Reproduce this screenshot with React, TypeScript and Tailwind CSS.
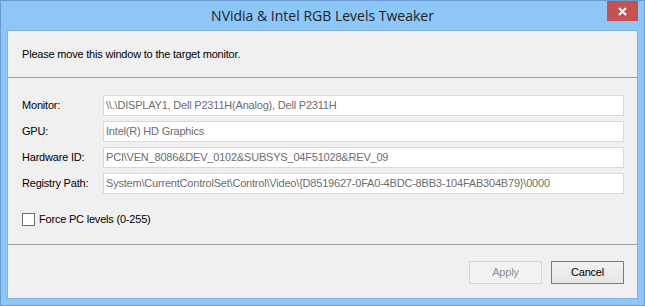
import React from "react";

const rows = [
  { label: "Monitor:", value: "\\\\.\\DISPLAY1, Dell P2311H(Analog), Dell P2311H" },
  { label: "GPU:", value: "Intel(R) HD Graphics" },
  { label: "Hardware ID:", value: "PCI\\VEN_8086&DEV_0102&SUBSYS_04F51028&REV_09" },
  {
    label: "Registry Path:",
    value: "System\\CurrentControlSet\\Control\\Video\\{D8519627-0FA0-4BDC-8BB3-104FAB304B79}\\0000",
  },
];

export default function App() {
  return (
    <div className="w-[645px] h-[306px] bg-[#8cc7f8] border border-[#6b9bd3] flex flex-col font-['Liberation_Sans',Arial,sans-serif] text-[11px] tracking-[-0.2px] text-black">
      {/* Title bar */}
      <div className="relative h-[29px] flex items-center justify-center shrink-0">
        <span className="font-['Open_Sans','Noto_Sans',sans-serif] text-[14px] tracking-normal text-[#222] pb-[1px]">
          NVidia &amp; Intel RGB Levels Tweaker
        </span>
        <button className="absolute right-[6px] top-0 w-[31px] h-[20px] bg-[#c75050] flex items-center justify-center">
          <svg width="9" height="9" viewBox="0 0 9 9">
            <path d="M1 1L8 8M8 1L1 8" stroke="white" strokeWidth="2" />
          </svg>
        </button>
      </div>

      {/* Client area */}
      <div className="mx-[6px] mb-[6px] flex-1 border border-[#83b3e3] bg-[#f0f0f0] flex flex-col">
        <div className="h-[47px] flex items-center pl-[14px] border-b border-[#a0a0a0]">
          Please move this window to the target monitor.
        </div>

        <div className="flex-1 flex flex-col pt-[17px] pl-[14px] pr-[13px] border-b border-[#a0a0a0]">
          <div className="flex flex-col gap-[5px]">
            {rows.map((r) => (
              <div key={r.label} className="flex items-center">
                <span className="w-[81px]">{r.label}</span>
                <div className="flex-1 h-[21px] bg-white border border-[#d9d9d9] flex items-center pl-[2px] text-[#6d6d6d] whitespace-nowrap overflow-hidden">
                  {r.value}
                </div>
              </div>
            ))}
          </div>

          <label className="mt-[17px] flex items-center gap-[4px]">
            <span className="w-[13px] h-[13px] bg-white border border-[#707070]" />
            <span>Force PC levels (0-255)</span>
          </label>
        </div>

        <div className="h-[53px] flex items-start justify-end gap-[9px] pt-[16px] pr-[13px]">
          <button className="w-[73px] h-[23px] border border-[#d5d5d5] bg-[#f2f2f2] text-[#8d8d8d]">
            Apply
          </button>
          <button className="w-[73px] h-[23px] border border-[#3c8ae0] bg-gradient-to-b from-[#f2f2f2] to-[#e5e5e5] text-black">
            Cancel
          </button>
        </div>
      </div>
    </div>
  );
}
